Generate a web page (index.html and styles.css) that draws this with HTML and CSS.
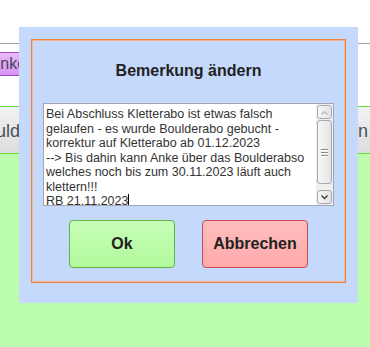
FILE: index.html
```html
<!DOCTYPE html>
<html lang="de">
<head>
    <meta charset="UTF-8">
    <meta name="viewport" content="width=device-width, initial-scale=1.0">
    <title>Bemerkung ändern</title>
    <link rel="stylesheet" href="styles.css">
</head>
<body>
    <div class="page">
        <div class="topbar"></div>
        <div class="toolbar">
            <span class="pill">Einkommen</span>
        </div>
        <div class="tabs">
            <span class="tab tab-left">Boulder</span>
            <span class="tab tab-right">Klettern</span>
        </div>
        <div class="content"></div>

        <div class="modal">
            <div class="dialog">
                <h2>Bemerkung ändern</h2>
                <div class="note">
                    <div class="note-text">Bei Abschluss Kletterabo ist etwas falsch<br>gelaufen - es wurde Boulderabo gebucht -<br>korrektur auf Kletterabo ab 01.12.2023<br>--&gt; Bis dahin kann Anke über das Boulderabso<br>welches noch bis zum 30.11.2023 läuft auch<br>klettern!!!<br>RB 21.11.2023<span class="caret"></span></div>
                    <div class="scrollbar">
                        <div class="sb-btn">
                            <svg width="7" height="5" viewBox="0 0 7 5"><polyline points="0.5,4.5 3.5,1.5 6.5,4.5" fill="none" stroke="#b4b8bd" stroke-width="1.2"/></svg>
                        </div>
                        <div class="sb-thumb">
                            <span class="grip"></span>
                            <span class="grip"></span>
                            <span class="grip"></span>
                        </div>
                        <div class="sb-track"></div>
                        <div class="sb-btn">
                            <svg width="7" height="5" viewBox="0 0 7 5"><polyline points="0.5,0.5 3.5,3.5 6.5,0.5" fill="none" stroke="#3a3a3a" stroke-width="1.3"/></svg>
                        </div>
                    </div>
                </div>
                <div class="actions">
                    <button class="btn btn-ok">Ok</button>
                    <button class="btn btn-cancel">Abbrechen</button>
                </div>
            </div>
        </div>
    </div>
</body>
</html>
```

FILE: styles.css
```css
body {
    margin: 0;
    padding: 0;
    font-family: "Liberation Sans", Arial, sans-serif;
    background-color: #bcfdac;
}

.page {
    position: relative;
    height: 347px;
    overflow: hidden;
}

.topbar {
    height: 43px;
    background-color: #fff;
    border-bottom: 1px solid #a2a2a2;
}

.toolbar {
    height: 54px;
    padding-top: 8px;
    background-color: #fff;
}

.pill {
    display: inline-block;
    box-sizing: border-box;
    height: 24px;
    line-height: 22px;
    margin-left: -20px;
    padding: 0 10px 0 6px;
    font-size: 16px;
    color: #45465a;
    background: linear-gradient(#e9b8f9, #d994f2);
    border-top: 1px solid #9c4cc8;
    border-bottom: 1px solid #9c4cc8;
}

.tabs {
    display: flex;
    align-items: center;
    height: 46px;
    border-top: 1px solid #66db3c;
    border-bottom: 1px solid #66db3c;
    background: linear-gradient(#f2f2f2, #dcdcdc);
    font-size: 18px;
    color: #45505e;
    white-space: nowrap;
}

.tab-left {
    margin-left: -26px;
    margin-top: 3px;
    width: 332px;
}

.tab-right {
    margin-top: 3px;
}

.content {
    height: 200px;
}

/* dialog */

.modal {
    position: absolute;
    left: 19px;
    top: 27px;
    width: 339px;
    box-sizing: border-box;
    padding: 12px 12px 20px 12px;
    background-color: #c5d9fc;
}

.dialog {
    border: 1px solid #ec8446;
    box-shadow: inset 0 0 0 1px #f4b48e;
    padding: 1px 11px 14px 11px;
}

.dialog h2 {
    margin: 20px 0 0 0;
    height: 20px;
    line-height: 20px;
    font-size: 16px;
    font-weight: bold;
    text-align: center;
    color: #222;
}

.note {
    display: flex;
    box-sizing: border-box;
    width: 291px;
    height: 103px;
    margin-top: 22px;
    background-color: #fff;
    border: 1px solid #a3a7ad;
}

.note-text {
    flex: 1;
    padding: 3px 2px 0 2px;
    overflow: hidden;
    font-size: 12.5px;
    line-height: 14.5px;
    color: #333;
    white-space: nowrap;
}

.caret {
    display: inline-block;
    width: 0;
    height: 13px;
    border-left: 1px solid #000;
    vertical-align: -2px;
}

.scrollbar {
    display: flex;
    flex-direction: column;
    width: 17px;
    box-sizing: border-box;
    padding: 1px 1px 1px 1px;
    background-color: #f0f0f0;
}

.sb-btn,
.sb-thumb {
    box-sizing: border-box;
    border: 1px solid #a3a9b1;
    border-radius: 3px;
    background: linear-gradient(to right, #f7f7f7, #e3e3e3);
}

.sb-btn {
    display: flex;
    align-items: center;
    justify-content: center;
    height: 14px;
}

.sb-thumb {
    display: flex;
    flex-direction: column;
    align-items: center;
    justify-content: center;
    gap: 2px;
    height: 64px;
    margin-top: 1px;
}

.grip {
    display: block;
    width: 7px;
    height: 1px;
    background-color: #8c8c8c;
    box-shadow: 0 1px 0 #fff;
}

.sb-track {
    flex: 1;
}

.actions {
    display: flex;
    justify-content: center;
    gap: 27px;
    margin-top: 14px;
}

.btn {
    width: 106px;
    height: 48px;
    border-radius: 4px;
    font-family: "Liberation Sans", Arial, sans-serif;
    font-size: 16px;
    font-weight: bold;
    color: #222;
    cursor: pointer;
}

.btn-ok {
    background: linear-gradient(#c6fdb6, #b2f99c);
    border: 1px solid #5fb548;
}

.btn-cancel {
    background: linear-gradient(#ffbdbd, #ffaaaa);
    border: 1px solid #c84a52;
}
```
